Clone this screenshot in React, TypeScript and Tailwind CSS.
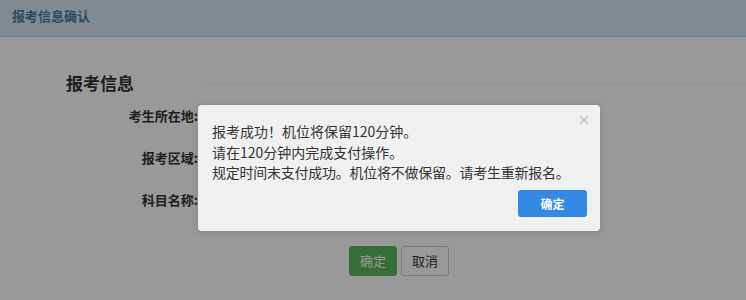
import { X } from 'lucide-react';

const font = { fontFamily: '"Microsoft YaHei", "Noto Sans CJK SC", "Liberation Sans", sans-serif' };

function Row({ label }: { label: string }) {
  return (
    <div className="flex h-[42px] items-center">
      <div className="w-[198px] text-right text-[13px] font-bold text-[#333]">{label}</div>
    </div>
  );
}

export default function App() {
  return (
    <div className="relative h-[300px] w-[746px] overflow-hidden bg-white" style={font}>
      <header className="flex h-[37px] items-start border-b border-[#a9cde3] bg-[#d4e6f2] px-3 pt-[6px]">
        <div className="text-[13px] font-bold text-[#4b7d9e]">报考信息确认</div>
      </header>

      <section className="pt-[36px]">
        <div className="flex items-center">
          <div className="w-[205px] pl-[66px] text-[17px] font-bold leading-[20px] text-[#333]">报考信息</div>
          <div className="flex-1 border-t border-[#eee]" />
        </div>
        <div className="mt-[2px]">
          <Row label="考生所在地:" />
          <Row label="报考区域:" />
          <Row label="科目名称:" />
        </div>
        <div className="mt-[25px] flex justify-center gap-1 pl-[52px]">
          <button className="h-[30px] w-[48px] rounded-[3px] bg-[#5cb85c] text-[13px] text-white">确定</button>
          <button className="h-[30px] w-[48px] rounded-[3px] border border-[#ccc] bg-white text-[13px] text-[#333]">取消</button>
        </div>
      </section>

      <div className="absolute inset-0 bg-black/40" />

      <div className="absolute left-[198px] top-[105px] h-[126px] w-[402px] rounded-[4px] bg-[#f0f0f0] shadow-[0_1px_6px_rgba(0,0,0,0.15)]">
        <button className="absolute right-[9px] top-[7px] flex h-[15px] w-[15px] items-center justify-center text-[#c2c2c2]">
          <X size={14} strokeWidth={3} />
        </button>
        <div className="px-[14px] pt-[16px] text-[14px] leading-[20.5px] text-[#333]">
          <p>报考成功！机位将保留120分钟。</p>
          <p>请在120分钟内完成支付操作。</p>
          <p className="tracking-[-0.25px]">规定时间末支付成功。机位将不做保留。请考生重新报名。</p>
        </div>
        <div className="absolute bottom-[14px] right-[13px]">
          <button className="h-[27px] w-[69px] rounded-[3px] bg-[#3489e4] text-[12px] font-bold text-white">确定</button>
        </div>
      </div>
    </div>
  );
}
